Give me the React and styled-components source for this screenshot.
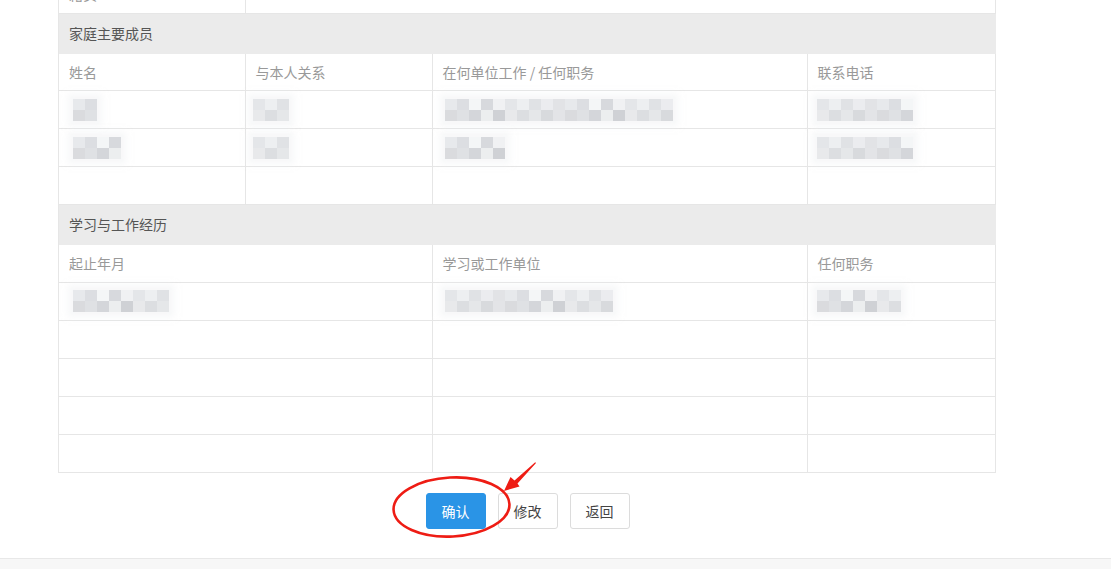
import React from "react";
import styled, { createGlobalStyle } from "styled-components";

const GlobalStyle = createGlobalStyle`
  html, body {
    margin: 0;
    padding: 0;
    background: #fff;
    font-family: "Noto Sans CJK SC", "Noto Sans", sans-serif;
    overflow: hidden;
  }
`;

const grays = ["#dcdee1", "#e3e4e7", "#d4d6da", "#e8e9eb", "#d8dadd", "#dfe1e4", "#cfd1d5", "#e5e7e9", "#dadbde", "#eceeef"];

function Blur({ cols, offset = 0, seed = 0 }) {
  const cells = [];
  for (let r = 0; r < 2; r++) {
    for (let c = 0; c < cols; c++) {
      const idx = (c * 7 + r * 3 + seed * 5) % grays.length;
      cells.push(<Cell key={r + "-" + c} style={{ background: r === 0 ? lighten(grays[idx]) : grays[idx] }} />);
    }
  }
  return (
    <BlurBox $cols={cols} $offset={offset}>
      {cells}
    </BlurBox>
  );
}

function lighten(hex) {
  const n = parseInt(hex.slice(1), 16);
  const f = (v) => Math.min(255, v + 8);
  return `rgb(${f((n >> 16) & 255)},${f((n >> 8) & 255)},${f(n & 255)})`;
}

function App() {
  return (
    <Page>
      <GlobalStyle />
      <Content>
        <Sheet>
          <Table>
            <colgroup>
              <col style={{ width: 186 }} />
              <col />
            </colgroup>
            <tbody>
              <Row>
                <Td><Label>籍贯</Label></Td>
                <Td />
              </Row>
            </tbody>
          </Table>

          <SectionTitle>家庭主要成员</SectionTitle>
          <Table>
            <colgroup>
              <col style={{ width: 186 }} />
              <col style={{ width: 187 }} />
              <col style={{ width: 375 }} />
              <col />
            </colgroup>
            <tbody>
              <Row>
                <Td $h={37}><Label>姓名</Label></Td>
                <Td $h={37}><Label>与本人关系</Label></Td>
                <Td $h={37}><Label>在何单位工作 / 任何职务</Label></Td>
                <Td $h={37}><Label>联系电话</Label></Td>
              </Row>
              <Row>
                <Td><Blur cols={2} offset={4} seed={1} /></Td>
                <Td><Blur cols={3} offset={-3} seed={2} /></Td>
                <Td><Blur cols={19} offset={2} seed={3} /></Td>
                <Td><Blur cols={8} offset={-1} seed={4} /></Td>
              </Row>
              <Row>
                <Td><Blur cols={4} offset={4} seed={5} /></Td>
                <Td><Blur cols={3} offset={-3} seed={6} /></Td>
                <Td><Blur cols={5} offset={2} seed={7} /></Td>
                <Td><Blur cols={8} offset={-1} seed={8} /></Td>
              </Row>
              <Row>
                <Td /><Td /><Td /><Td />
              </Row>
            </tbody>
          </Table>

          <SectionTitle>学习与工作经历</SectionTitle>
          <Table>
            <colgroup>
              <col style={{ width: 373 }} />
              <col style={{ width: 375 }} />
              <col />
            </colgroup>
            <tbody>
              <Row>
                <Td $h={37}><Label>起止年月</Label></Td>
                <Td $h={37}><Label>学习或工作单位</Label></Td>
                <Td $h={37}><Label>任何职务</Label></Td>
              </Row>
              <Row>
                <Td><Blur cols={8} offset={4} seed={9} /></Td>
                <Td><Blur cols={14} offset={2} seed={10} /></Td>
                <Td><Blur cols={7} offset={-1} seed={11} /></Td>
              </Row>
              {[0, 1, 2, 3].map((i) => (
                <Row key={i}>
                  <Td /><Td /><Td />
                </Row>
              ))}
            </tbody>
          </Table>
        </Sheet>

        <Actions>
          <Button $primary>确认</Button>
          <Button>修改</Button>
          <Button>返回</Button>
          <Annotation width="180" height="90" viewBox="0 0 180 90">
            <ellipse cx="66.5" cy="46" rx="58" ry="29.5" transform="rotate(-3 66.5 46)" fill="none" stroke="#ee1c14" strokeWidth="2.6" />
            <polygon points="151,2 132.5,22.5 134.5,25.5 119,30 125.5,16 129.5,19.5 150.2,1.2" fill="#ee1c14" />
          </Annotation>
        </Actions>
      </Content>
      <Footer />
    </Page>
  );
}

export default App;

const Page = styled.div`
  width: 1111px;
  height: 569px;
  display: flex;
  flex-direction: column;
  overflow: hidden;
`;

const Content = styled.div`
  flex: 1;
  min-height: 0;
  padding-left: 58px;
  width: 937px;
`;

const Sheet = styled.div`
  margin-top: -25px;
  border-right: 1px solid #e6e6e6;
  border-left: 1px solid #e6e6e6;
  width: 936px;
`;

const Table = styled.table`
  width: 100%;
  border-collapse: collapse;
  table-layout: fixed;
`;

const Row = styled.tr``;

const Td = styled.td`
  box-sizing: border-box;
  height: ${(p) => p.$h || 38}px;
  border: 1px solid #e6e6e6;
  border-top: none;
  padding: 0 10px;
  vertical-align: middle;
  font-size: 14px;
  &:first-child {
    border-left: none;
  }
  &:last-child {
    border-right: none;
  }
`;

const Label = styled.span`
  color: #999;
  font-size: 14px;
`;

const SectionTitle = styled.div`
  height: 40px;
  line-height: 38px;
  background: #ebebeb;
  color: #555;
  font-size: 14px;
  padding-left: 10px;
  margin-right: -1px;
`;

const BlurBox = styled.div`
  display: grid;
  grid-template-columns: repeat(${(p) => p.$cols}, 12px);
  grid-template-rows: 11px 11px;
  width: max-content;
  margin-left: ${(p) => p.$offset}px;
  box-shadow: 0 0 6px 5px rgba(240, 241, 243, 0.5);
  filter: blur(0.5px);
`;

const Cell = styled.div``;

const Actions = styled.div`
  position: relative;
  display: flex;
  justify-content: center;
  gap: 12px;
  padding-top: 20px;
  padding-left: 2px;
`;

const Button = styled.button`
  width: 60px;
  height: 36px;
  border-radius: 3px;
  font-family: "Noto Sans CJK SC", sans-serif;
  font-size: 14px;
  cursor: pointer;
  border: 1px solid ${(p) => (p.$primary ? "#2a94e6" : "#dcdcdc")};
  background: ${(p) => (p.$primary ? "#2a94e6" : "#fff")};
  color: ${(p) => (p.$primary ? "#fff" : "#444")};
`;

const Annotation = styled.svg`
  position: absolute;
  left: 327px;
  top: -12px;
  pointer-events: none;
`;

const Footer = styled.div`
  flex-shrink: 0;
  height: 10px;
  background: #f7f7f7;
  border-top: 1px solid #e8e8e8;
`;
